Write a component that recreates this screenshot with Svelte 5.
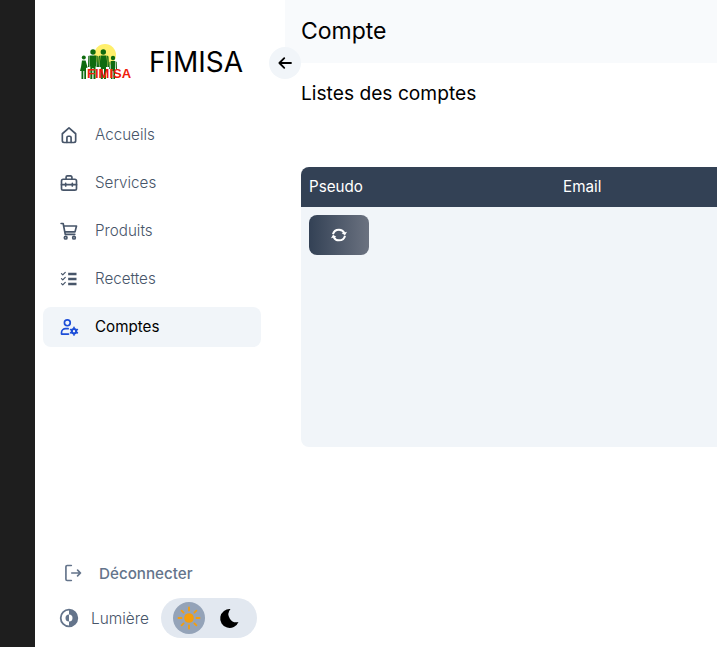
<script>
  const menu = [
    { label: "Accueils", icon: "home" },
    { label: "Services", icon: "case" },
    { label: "Produits", icon: "cart" },
    { label: "Recettes", icon: "list" },
    { label: "Comptes", icon: "user", active: true },
  ];
</script>

<div class="page">
  <div class="strip"></div>

  <aside class="sidebar">
    <div class="brand">
      <div class="logo">
        <svg width="52" height="36" viewBox="0 0 52 36">
          <circle cx="25" cy="11" r="11" fill="#ffef6b" />
          <g fill="#0f6b0f">
            <!-- girl -->
            <circle cx="3.800" cy="13.500" r="2" />
            <path d="M2 16.500h3.600l2 7-1.600.5V35H4.300v-8H3.300v8H1.500v-8H0l1-4z" />
            <!-- man -->
            <circle cx="13" cy="8" r="2.700" />
            <path d="M10 11.500h6v11h-.5V35h-2V24h-1.200v11h-2V22.500H10z" />
            <path d="M9.700 11.500 8.300 12l-.3 11h1.500zM16.300 11.500l1.400.5.3 11h-1.500z" />
            <!-- woman -->
            <circle cx="23.300" cy="8" r="2.700" />
            <path d="M20.500 11.500h6l1 11.500h-1.500V35h-2V25h-1.200v10h-2V23h-1.300z" />
            <path d="M20 11.500 18.500 12.500 18 23h1.300zM27 11.500l1.500 1 .5 10.500h-1.300z" />
            <!-- boy -->
            <circle cx="33" cy="14" r="2.200" />
            <path d="M31 17h4.200v7.500h-.2V35h-1.600v-8h-.9v8h-1.600V24.500H31z" />
            <path d="M30.500 17.300 29.500 18l-.3 7h1.200zM35.700 17.300l1 .8.300 6.900h-1z" />
          </g>
        </svg>
        <span class="logo-text">FIMISA</span>
      </div>
      <span class="brand-name">FIMISA</span>
      <button class="collapse" aria-label="Réduire">
        <svg width="18" height="18" viewBox="0 0 24 24" fill="none" stroke="#000" stroke-width="2.400" stroke-linecap="round" stroke-linejoin="round">
          <path d="M20 12H4.500M11 5.500 4.500 12l6.500 6.500" />
        </svg>
      </button>
    </div>

    <nav class="menu">
      {#each menu as item}
        <div class="item" class:active={item.active}>
          <svg class="icon" width="20" height="20" viewBox="0 0 24 24" fill="none" stroke="currentColor" stroke-width="2" stroke-linecap="round" stroke-linejoin="round">
            {#if item.icon === "home"}
              <path d="M4 10.500 12 3.500l8 7V19a2 2 0 0 1-2 2H6a2 2 0 0 1-2-2z" />
              <path d="M9.500 21v-6a1.500 1.500 0 0 1 1.500-1.500h2a1.500 1.500 0 0 1 1.500 1.500v6" />
            {:else if item.icon === "case"}
              <rect x="3" y="7.500" width="18" height="13" rx="2" />
              <path d="M8.500 7.500V5a1.500 1.500 0 0 1 1.500-1.500h4A1.500 1.500 0 0 1 15.500 5v2.500M3 14h18M8 12.500v3M16 12.500v3" />
            {:else if item.icon === "cart"}
              <circle cx="8" cy="20" r="1.600" />
              <circle cx="18" cy="20" r="1.600" />
              <path d="M2.500 3H5l2.500 13H19M5.600 6H21l-1.800 7H7" />
            {:else if item.icon === "list"}
              <path d="M11 6h10M11 12h10M11 18h10" stroke-width="3" stroke-linecap="butt" />
              <path d="m3 5.500 1.500 1.500L7.500 4M3 11.500 4.500 13l3-3M3 17.500 4.500 19l3-3" stroke-width="1.500" />
            {:else}
              <circle cx="10" cy="7" r="3.500" />
              <path d="M3 20.500v-1.500a5 5 0 0 1 5-5h3M3 20.500h8.500" />
              <circle cx="18" cy="17" r="2.600" stroke-width="2.400" />
              <path d="M18 12.500v1.500M18 20v1.500M14 15l1.400.800M20.600 18.200l1.400.800M14 19l1.400-.800M20.600 15.800l1.400-.800" stroke-width="2" />
            {/if}
          </svg>
          <span class="label">{item.label}</span>
        </div>
      {/each}
    </nav>

    <div class="bottom">
      <div class="logout">
        <svg width="20" height="20" viewBox="0 0 24 24" fill="none" stroke="currentColor" stroke-width="2" stroke-linecap="round" stroke-linejoin="round">
          <path d="M10 3H5a1.500 1.500 0 0 0-1.500 1.500v15A1.500 1.500 0 0 0 5 21h5M10.500 12H21M17.500 8.500 21 12l-3.500 3.500" />
        </svg>
        <span>Déconnecter</span>
      </div>
      <div class="theme">
        <svg class="contrast" width="20" height="20" viewBox="0 0 20 20">
          <circle cx="10" cy="10" r="8.300" fill="#fff" stroke="#64748b" stroke-width="1.800" />
          <path d="M10 1.700a8.300 8.300 0 0 1 0 16.600z" fill="#64748b" />
          <path d="M10 6.500a3.500 3.500 0 0 0 0 7z" fill="#64748b" />
          <path d="M10 6.500a3.500 3.500 0 0 1 0 7z" fill="#fff" />
        </svg>
        <span class="theme-label">Lumière</span>
        <div class="switch">
          <span class="knob">
            <svg width="26" height="26" viewBox="0 0 26 26" fill="none" stroke="#f59e0b" stroke-width="1.800" stroke-linecap="round">
              <circle cx="13" cy="13" r="4.800" fill="#f59e0b" stroke="none" />
              <path d="M13 2.500v3M13 20.500v3M2.500 13h3M20.500 13h3M5.600 5.600l2 2M18.400 18.400l2 2M5.600 20.400l2-2M18.400 7.600l2-2" />
            </svg>
          </span>
          <span class="moon">
            <svg width="24" height="24" viewBox="0 0 24 24">
              <path d="M13.500 3a9.500 9.500 0 1 0 8 13A8 8 0 0 1 13.500 3z" fill="#000" />
            </svg>
          </span>
        </div>
      </div>
    </div>
  </aside>

  <main class="content">
    <header class="topbar">Compte</header>
    <div class="body">
      <h2>Listes des comptes</h2>
      <div class="table">
        <div class="thead">
          <span class="col-pseudo">Pseudo</span>
          <span>Email</span>
        </div>
        <div class="tbody">
          <button class="refresh" aria-label="Actualiser">
            <svg width="18" height="16" viewBox="0 0 27 24" fill="none" stroke="#fff" stroke-width="3" stroke-linejoin="round">
              <path d="M4.500 11C5.500 6.500 9 4 13.500 4c3.500 0 6.500 1.800 8 5" />
              <path d="M22.500 13c-1 4.500-4.500 7-9 7-3.500 0-6.500-1.800-8-5" />
              <path d="M25.500 7 22.500 12.500 17.500 9.500zM1.500 17 4.500 11.500 9.500 14.500z" fill="#fff" stroke="none" />
            </svg>
          </button>
        </div>
      </div>
    </div>
  </main>
</div>

<style>
  :global(body) {
    margin: 0;
    background: #fff;
  }

  .page {
    display: flex;
    height: 647px;
    width: 717px;
    overflow: hidden;
    font-family: Inter, "Liberation Sans", sans-serif;
  }

  .strip {
    width: 35px;
    flex: none;
    background: #1e1e1e;
  }

  .sidebar {
    width: 250px;
    flex: none;
    display: flex;
    flex-direction: column;
    background: #fff;
    position: relative;
    z-index: 1;
  }

  .brand {
    height: 115px;
    flex: none;
    display: flex;
    align-items: flex-start;
    padding: 44px 0 0 45px;
    box-sizing: border-box;
    position: relative;
  }

  .logo {
    position: relative;
    width: 52px;
    height: 36px;
    flex: none;
  }

  .logo svg {
    display: block;
  }

  .logo-text {
    position: absolute;
    left: 7px;
    top: 24px;
    font-family: "Liberation Sans", sans-serif;
    font-size: 13px;
    line-height: 12px;
    font-weight: 700;
    color: #f01a0a;
  }

  .brand-name {
    margin-left: 17px;
    margin-top: 1px;
    font-size: 28px;
    line-height: 34px;
    color: #000;
  }

  .collapse {
    position: absolute;
    left: 234px;
    top: 47px;
    width: 32px;
    height: 32px;
    border: 0;
    padding: 0;
    border-radius: 50%;
    background: #f1f5f9;
    display: flex;
    align-items: center;
    justify-content: center;
  }

  .menu {
    display: flex;
    flex-direction: column;
    gap: 8px;
    padding: 0 24px 0 8px;
  }

  .item {
    height: 40px;
    display: flex;
    align-items: center;
    gap: 16px;
    padding-left: 16px;
    border-radius: 8px;
    font-size: 15.200px;
    font-weight: 300;
    color: #475569;
  }

  .label {
    padding-bottom: 2px;
  }

  .item.active {
    background: #f1f5f9;
    color: #000;
    font-weight: 400;
  }

  .item .icon {
    flex: none;
    color: #475569;
  }

  .item.active .icon {
    color: #1d4ed8;
  }

  .bottom {
    margin-top: auto;
    padding: 0 28px 9px 24px;
    display: flex;
    flex-direction: column;
    gap: 7px;
  }

  .logout {
    display: flex;
    align-items: center;
    gap: 16px;
    height: 36px;
    padding-left: 4px;
    color: #64748b;
    font-size: 15.200px;
    font-weight: 500;
  }

  .theme {
    display: flex;
    align-items: center;
  }

  .theme-label {
    margin-left: 12px;
    font-size: 15.400px;
    font-weight: 300;
    color: #475569;
  }

  .switch {
    margin-left: 12px;
    width: 96px;
    height: 40px;
    border-radius: 20px;
    background: #e2e8f0;
    display: flex;
    align-items: center;
    padding: 0 12px;
    box-sizing: border-box;
    gap: 8px;
  }

  .knob {
    width: 32px;
    height: 32px;
    border-radius: 50%;
    background: #94a3b8;
    display: flex;
    align-items: center;
    justify-content: center;
    flex: none;
  }

  .moon {
    width: 32px;
    height: 32px;
    display: flex;
    align-items: center;
    justify-content: center;
    flex: none;
  }

  .content {
    flex: 1;
    min-width: 0;
    display: flex;
    flex-direction: column;
  }

  .topbar {
    height: 63px;
    flex: none;
    box-sizing: border-box;
    padding: 13px 16px 0;
    background: #f8fafc;
    font-size: 23px;
    line-height: 36px;
    color: #000;
  }

  .body {
    padding: 16px;
  }

  h2 {
    margin: 0 0 60px;
    font-size: 19.200px;
    line-height: 28px;
    font-weight: 400;
    color: #000;
  }

  .table {
    width: 640px;
    border-radius: 8px;
    overflow: hidden;
  }

  .thead {
    height: 40px;
    background: #334155;
    color: #fff;
    font-size: 15.200px;
    line-height: 40px;
    display: flex;
    align-items: flex-start;
    padding-left: 8px;
  }

  .col-pseudo {
    width: 254px;
  }

  .tbody {
    height: 240px;
    background: #f1f5f9;
    padding: 8px;
    box-sizing: border-box;
  }

  .refresh {
    width: 60px;
    height: 40px;
    border: 0;
    padding: 0;
    border-radius: 8px;
    background: linear-gradient(to right, #334155, #6b7280);
    display: flex;
    align-items: center;
    justify-content: center;
  }
</style>
